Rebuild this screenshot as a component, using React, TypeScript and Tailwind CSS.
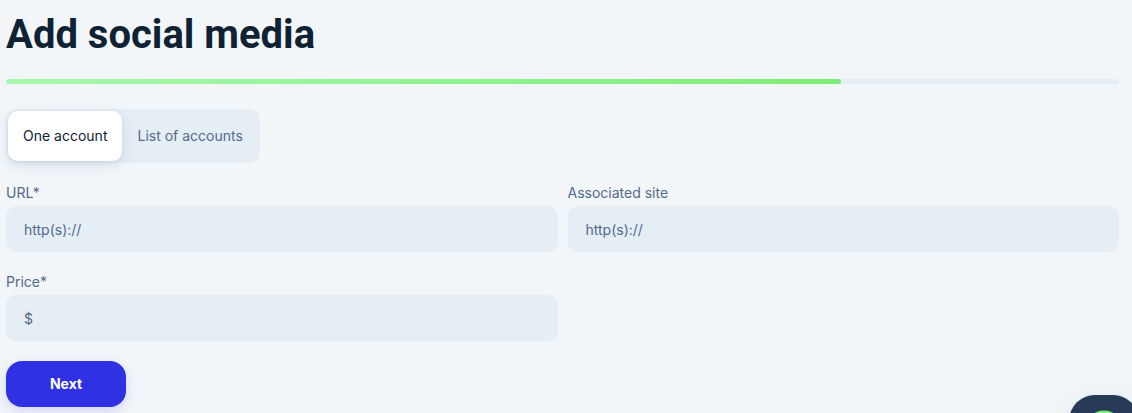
import { useState } from 'react';
import clsx from 'clsx';

const TABS = ['One account', 'List of accounts'];

type FieldProps = {
  id: string;
  label: string;
  placeholder: string;
};

function Field({ id, label, placeholder }: FieldProps) {
  return (
    <div className="flex flex-col gap-[3px]">
      <label htmlFor={id} className="text-sm text-[#526a8e]">
        {label}
      </label>
      <input
        id={id}
        type="text"
        placeholder={placeholder}
        className="h-[46px] w-full rounded-[10px] bg-[#e5edf5] px-[18px] text-sm text-[#526a8e] outline-none placeholder:text-[#526a8e]"
      />
    </div>
  );
}

function ProgressBar({ value }: { value: number }) {
  return (
    <div
      role="progressbar"
      aria-label="Progress"
      aria-valuenow={value}
      className="h-[5px] rounded-full bg-[#e5edf5]"
    >
      <div
        className="h-full rounded-full bg-linear-to-r from-[#a8f8b0] to-[#7cee75]"
        style={{ width: `${value}%` }}
      />
    </div>
  );
}

function ChatButton() {
  return (
    <button
      type="button"
      aria-label="Open chat"
      className="fixed -right-[7px] -bottom-[52px] flex size-[70px] items-center justify-center rounded-[26px] bg-[#273b56] shadow-[0_4px_24px_rgba(39,59,86,0.08)]"
    >
      <svg width="40" height="40" viewBox="0 0 40 40" fill="none">
        <circle cx="20" cy="20" r="17" stroke="#7cee75" strokeWidth="5" />
      </svg>
    </button>
  );
}

export default function App() {
  const [activeTab, setActiveTab] = useState(TABS[0]);

  return (
    <main className="min-h-screen bg-[#f2f6f9] pt-[11px] pr-[13px] pb-[6px] pl-[6px] font-['Inter',sans-serif]">
      <h1 className="mb-5 font-['Roboto',sans-serif] text-[40px] leading-[48px] font-bold text-[#0e2233]">
        Add social media
      </h1>
      <ProgressBar value={75} />

      <form className="mt-[25px] flex flex-col items-start gap-5" onSubmit={(e) => e.preventDefault()}>
        <div className="flex rounded-[10px] bg-[#e5edf5] p-[2px]">
          {TABS.map((tab) => (
            <button
              key={tab}
              type="button"
              aria-pressed={tab === activeTab}
              onClick={() => setActiveTab(tab)}
              className={clsx(
                'h-[50px] rounded-[10px] px-[15px] text-sm',
                tab === activeTab
                  ? 'bg-white text-[#0e2233] shadow-[0_4px_12px_rgba(82,116,160,0.2)]'
                  : 'text-[#526a8e]'
              )}
            >
              {tab}
            </button>
          ))}
        </div>

        <div className="grid w-full grid-cols-2 gap-x-[10px] gap-y-5">
          <Field id="url" label="URL*" placeholder="http(s)://" />
          <Field id="site" label="Associated site" placeholder="http(s)://" />
          <Field id="price" label="Price*" placeholder="$" />
        </div>

        <button
          type="submit"
          className="h-[46px] w-[120px] rounded-2xl bg-[#2f31e3] text-sm font-bold text-white shadow-[0_4px_12px_rgba(47,49,227,0.16)]"
        >
          Next
        </button>
      </form>

      <ChatButton />
    </main>
  );
}
